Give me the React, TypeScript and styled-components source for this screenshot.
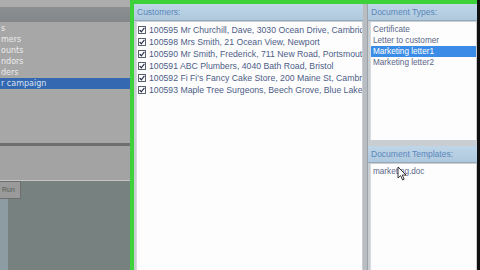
import styled, { createGlobalStyle } from "styled-components";

const GlobalStyle = createGlobalStyle`
  html, body {
    margin: 0;
    padding: 0;
    background: #777f7e;
    overflow: hidden;
  }
  body {
    font-family: "Liberation Sans", "DejaVu Sans", sans-serif;
    font-size: 8.2px;
  }
`;

const Screen = styled.div`
  display: flex;
  width: 480px;
  height: 270px;
`;

/* ---------- left side (dimmed app behind) ---------- */

const LeftPane = styled.div`
  width: 130px;
  display: flex;
  flex-direction: column;
`;

const TopStrip = styled.div`
  height: 7px;
  background: #adadad;
`;

const LeftHeader = styled.div`
  height: 15px;
  background: linear-gradient(#8b8f92, #84888b);
`;

const NavList = styled.ul`
  list-style: none;
  margin: 0;
  padding: 1px 0 0;
  height: 120px;
  background: #a7a7a7;
  font-family: "DejaVu Sans", sans-serif;
  font-size: 8px;
`;

const NavItem = styled.li<{ $active?: boolean }>`
  height: 11px;
  line-height: 11px;
  padding-left: 1px;
  color: ${(p) => (p.$active ? "#d7e2f2" : "#ececec")};
  background: ${(p) => (p.$active ? "#3468b0" : "transparent")};
  white-space: nowrap;
`;

const DarkRule = styled.div`
  height: 3px;
  background: #6f6f6f;
`;

const GrayBlock = styled.div`
  height: 34px;
  background: #a3a3a3;
  border-bottom: 1px solid #c4c4c4;
`;

const BottomArea = styled.div`
  flex: 1;
  display: flex;
  flex-direction: column;
  background: #77817f;
`;

const RunButton = styled.div`
  width: 21px;
  height: 18px;
  box-sizing: border-box;
  background: #9a9a9a;
  border: 1px solid #6e6e6e;
  border-left: none;
  color: #5a5a5a;
  font-size: 7px;
  line-height: 16px;
  padding-left: 2px;
`;

const SideStrip = styled.div`
  flex: 1;
  width: 8px;
  background: #8d9ba3;
`;

/* ---------- highlighted dialog ---------- */

const Frame = styled.div`
  flex: 1;
  display: flex;
  border-left: 4px solid #3dd23a;
  border-top: 4px solid #3dd23a;
  background: #c9ced2;
  position: relative;
`;

const Column = styled.div<{ $width?: number }>`
  display: flex;
  flex-direction: column;
  min-width: 0;
  ${(p) => (p.$width ? `width: ${p.$width}px;` : "flex: 1;")}
`;

const Splitter = styled.div`
  width: 4px;
  background: #b9bdc1;
  border-right: 1px solid #9aa3aa;
`;

const PanelHeader = styled.div`
  height: 16px;
  line-height: 16px;
  padding-left: 3px;
  background: linear-gradient(#bfd6e8, #aec8dd);
  color: #5a86bb;
  font-size: 8.5px;
  border-bottom: 1px solid #96aabb;
  white-space: nowrap;
  overflow: hidden;
`;

const ListBox = styled.div<{ $height?: number }>`
  background: #fdfdfe;
  margin: 1px 1px 0 2px;
  padding-top: 2px;
  border-left: 1px solid #d6dbe0;
  ${(p) => (p.$height ? `height: ${p.$height}px;` : "flex: 1;")}
  overflow: hidden;
`;

const CheckRow = styled.div`
  display: flex;
  align-items: center;
  gap: 3px;
  height: 12px;
  padding-left: 1px;
  color: #4d5d86;
  font-size: 8.7px;
  white-space: nowrap;
  overflow: hidden;
`;

const Box = styled.span`
  width: 8px;
  height: 8px;
  flex: none;
  box-sizing: border-box;
  border: 1px solid #59606e;
  background: #fff;
  display: flex;
  align-items: center;
  justify-content: center;
`;

const Item = styled.div<{ $active?: boolean }>`
  height: 11px;
  line-height: 11px;
  padding-left: 2px;
  color: ${(p) => (p.$active ? "#ffffff" : "#5b6688")};
  background: ${(p) => (p.$active ? "#3a8ce6" : "transparent")};
  white-space: nowrap;
`;

const Gap = styled.div`
  height: 6px;
`;

const EdgeStrip = styled.div`
  width: 3px;
  background: #101010;
`;

const Cursor = styled.svg`
  position: absolute;
  left: 263px;
  top: 162px;
`;

const Check = () => (
  <svg width="6" height="6" viewBox="0 0 6 6">
    <path d="M0.6 3 L2.3 4.8 L5.4 0.8" fill="none" stroke="#2b3350" strokeWidth="1.2" />
  </svg>
);

const customers = [
  "100595 Mr Churchill, Dave, 3030 Ocean Drive, Cambridge",
  "100598 Mrs Smith, 21 Ocean View, Newport",
  "100590 Mr Smith, Frederick, 711 New Road, Portsmouth",
  "100591 ABC Plumbers, 4040 Bath Road, Bristol",
  "100592 Fi Fi's Fancy Cake Store, 200 Maine St, Cambridge",
  "100593 Maple Tree Surgeons, Beech Grove, Blue Lake",
];

const docTypes = ["Certificate", "Letter to customer", "Marketing letter1", "Marketing letter2"];

const navItems = ["s", "mers", "ounts", "ndors", "ders", "r campaign"];

export default function App() {
  return (
    <Screen>
      <GlobalStyle />
      <LeftPane>
        <TopStrip />
        <LeftHeader />
        <NavList>
          {navItems.map((n, i) => (
            <NavItem key={n} $active={i === navItems.length - 1}>
              {n}
            </NavItem>
          ))}
        </NavList>
        <DarkRule />
        <GrayBlock />
        <BottomArea>
          <RunButton>Run</RunButton>
          <SideStrip />
        </BottomArea>
      </LeftPane>

      <Frame>
        <Column $width={229}>
          <PanelHeader>Customers:</PanelHeader>
          <ListBox>
            {customers.map((c) => (
              <CheckRow key={c}>
                <Box>
                  <Check />
                </Box>
                {c}
              </CheckRow>
            ))}
          </ListBox>
        </Column>
        <Splitter />
        <Column>
          <PanelHeader>Document Types:</PanelHeader>
          <ListBox $height={116}>
            {docTypes.map((d, i) => (
              <Item key={d} $active={i === 2}>
                {d}
              </Item>
            ))}
          </ListBox>
          <Gap />
          <PanelHeader>Document Templates:</PanelHeader>
          <ListBox>
            <Item>marketing.doc</Item>
          </ListBox>
        </Column>
        <Cursor width="11" height="16" viewBox="0 0 11 16">
          <path d="M1 1 L1 12 L3.6 9.6 L5.6 14 L7.2 13.3 L5.3 9 L9 9 Z" fill="#fff" stroke="#222" strokeWidth="0.9" />
        </Cursor>
      </Frame>
      <EdgeStrip />
    </Screen>
  );
}
